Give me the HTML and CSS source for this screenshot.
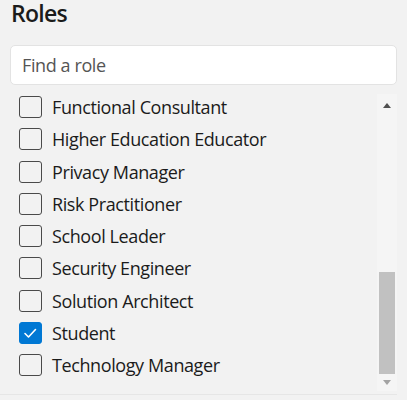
FILE: index.html
```html
<!DOCTYPE html>
<html>
<head>
<meta charset="utf-8">
<link rel="stylesheet" href="styles.css">
</head>
<body>
<div class="panel">
  <h2 class="title">Roles</h2>
  <div class="search">Find a role</div>
  <div class="listwrap">
    <ul class="list">
      <li class="item"><span class="box"></span><span class="label">Functional Consultant</span></li>
      <li class="item"><span class="box"></span><span class="label">Higher Education Educator</span></li>
      <li class="item"><span class="box"></span><span class="label">Privacy Manager</span></li>
      <li class="item"><span class="box"></span><span class="label">Risk Practitioner</span></li>
      <li class="item"><span class="box"></span><span class="label">School Leader</span></li>
      <li class="item"><span class="box"></span><span class="label">Security Engineer</span></li>
      <li class="item"><span class="box"></span><span class="label">Solution Architect</span></li>
      <li class="item"><span class="box checked"><svg viewBox="0 0 22 22" width="22" height="22"><path d="M6 11.5 L9.5 15 L16.5 7.5" fill="none" stroke="#fff" stroke-width="1.6" stroke-linecap="round" stroke-linejoin="round"/></svg></span><span class="label">Student</span></li>
      <li class="item"><span class="box"></span><span class="label">Technology Manager</span></li>
    </ul>
    <div class="scrollbar">
      <div class="arrow up"></div>
      <div class="track"><div class="thumb"></div></div>
      <div class="arrow down"></div>
    </div>
  </div>
  <div class="rule"></div>
</div>
</body>
</html>
```

FILE: styles.css
```css
* { box-sizing: border-box; }
html, body { margin: 0; padding: 0; background: #f2f2f2; }
body {
  font-family: "Open Sans", "Noto Sans", sans-serif;
  color: #1b1b1b;
  width: 407px;
  height: 400px;
  overflow: hidden;
}
.panel { padding: 0 10px 0 0; }
.title {
  margin: 0;
  padding: 0 0 0 11px;
  font-size: 23px;
  font-weight: 600;
  letter-spacing: -0.7px;
  line-height: 26px;
  height: 34px;
}
.search {
  margin: 11px 0 0 10px;
  height: 40px;
  background: #fff;
  border: 1px solid #e3e3e3;
  border-radius: 5px;
  padding-left: 11px;
  font-size: 18px;
  letter-spacing: -0.4px;
  line-height: 38px;
  color: #555;
}
.listwrap {
  display: flex;
  margin-top: 6px;
  height: 300px;
}
.list {
  flex: 1;
  list-style: none;
  margin: 0;
  padding: 0;
  overflow: hidden;
}
.item {
  display: flex;
  align-items: center;
  height: 32.25px;
  padding-left: 19px;
  font-size: 18px;
  letter-spacing: -0.4px;
}
.box {
  width: 23px;
  height: 22px;
  border: 1px solid #4a4a4a;
  border-radius: 3px;
  flex: none;
  margin-right: 10px;
  display: flex;
}
.box.checked { background: #0078d4; border-color: #0078d4; }
.box svg { display: block; margin: -1px; }
.scrollbar {
  width: 20px;
  display: flex;
  flex-direction: column;
  background: #f5f5f5;
  padding: 0 2px;
  margin-top: 3px;
}
.arrow { height: 17px; flex: none; display: flex; align-items: center; justify-content: center; }
.arrow.up { margin-top: 3px; }
.arrow.up::before {
  content: "";
  border-left: 4.5px solid transparent;
  border-right: 4.5px solid transparent;
  border-bottom: 5px solid #505050;
}
.arrow.down::before {
  content: "";
  border-left: 4.5px solid transparent;
  border-right: 4.5px solid transparent;
  border-top: 5px solid #a3a3a3;
}
.track { flex: 1; display: flex; flex-direction: column; justify-content: flex-end; }
.thumb { height: 102px; background: #c1c1c1; }
.rule { height: 1px; background: #e6e6e6; margin-top: 3px; }
```
